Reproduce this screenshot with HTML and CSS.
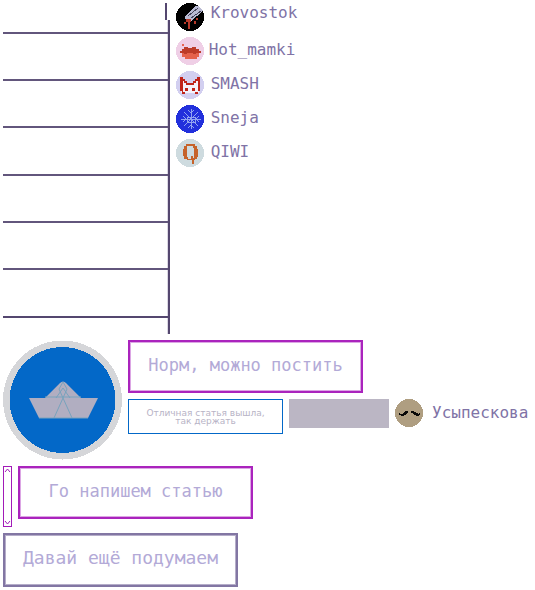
FILE: index.html
```html
<!DOCTYPE html>
<html lang="ru">
<head>
<meta charset="utf-8">
<title>Чаты</title>
<link rel="stylesheet" href="styles.css">
</head>
<body>
<main class="page">
  <section class="top">
    <div class="list">
      <div class="notch"></div>
      <div class="slots">
        <div class="slot slot-first"></div><div class="slot"></div><div class="slot"></div><div class="slot"></div><div class="slot"></div><div class="slot"></div><div class="slot"></div>
      </div>
    </div>
    <ul class="contacts">
      <li class="contact contact-first">
        <svg class="avatar" viewBox="0 0 28 28" shape-rendering="crispEdges"><circle cx="14" cy="14" r="14" fill="#000"/><path d="M9 13L20 3H23L27 8L15 18H12L9 16Z" fill="#b9bad2"/><path d="M12 13L22 5M15 15L25 8" stroke="#45435a" stroke-width="1"/><path d="M10 16h5v3h-1v7h-2v-7h-2v2H8v-2h2zM18 18h2v3h-2zM20 15h2v2h-2z" fill="#b73a2b"/></svg>
        <span class="name">Krovostok</span>
      </li>
      <li class="contact contact-near">
        <svg class="avatar" viewBox="0 0 28 28" shape-rendering="crispEdges"><circle cx="14" cy="14" r="14" fill="#efcfe6"/><path d="M4 14h2v-2h2v-2h4v1h4v-1h4v2h3v2h2v2h-2v4h-2v2H9v-2H6v-4H4z" fill="#e5614c"/><path d="M4 14h2v-2h2v-2h4v1h4v-1h4v2h3v2h2v2h-5v1h-3v-1h-6v1H8v-1H4z" fill="#bd3b29"/><path d="M6 7h2v2H6z" fill="#e86450"/></svg>
        <span class="name">Hot_mamki</span>
      </li>
      <li class="contact">
        <svg class="avatar" viewBox="0 0 28 28" shape-rendering="crispEdges"><circle cx="14" cy="14" r="14" fill="#d2cff0"/><path d="M5 22V8L11 13H17L23 8V22" fill="#f4f1fb"/><path d="M4 6h3v2h2v2h2v2h6v-2h2V8h2V6h3v14h-2v3h-3v-2h3V10h-2v2h-2v2h-8v-2H8v-2H7v11h2v2H6v-3H4z" fill="#c0241a"/><path d="M9 17h3v3H9zM16 17h3v3h-3z" fill="#c0241a"/></svg>
        <span class="name">SMASH</span>
      </li>
      <li class="contact">
        <svg class="avatar" viewBox="0 0 28 28" shape-rendering="crispEdges"><circle cx="14" cy="14" r="14" fill="#2230dc"/><path d="M15 4V24M5 14H25M8 7L22 21M22 7L8 21M12 5L15 8L18 5M12 23L15 20L18 23M7 11L10 14L7 17M23 11L20 14L23 17M11 12h8v5h-8z" fill="none" stroke="#91a4f1"/></svg>
        <span class="name">Sneja</span>
      </li>
      <li class="contact">
        <svg class="avatar" viewBox="0 0 28 28" shape-rendering="crispEdges"><circle cx="14" cy="14" r="14" fill="#cedbdf"/><path fill-rule="evenodd" d="M10 5h9v2h2v3h1v8h-1v2h-2v1h-1v4h-2v-4h-5v-1H8v-3H7v-7h1V7h2zM11 7v2v9h1v2h3v-3h2v2h1v-10h-1V7z" fill="#c6632a"/></svg>
        <span class="name">QIWI</span>
      </li>
    </ul>
  </section>
  <section class="chat">
    <svg class="boat" viewBox="0 0 119 120"><g shape-rendering="crispEdges"><circle cx="59.5" cy="60" r="59.5" fill="#d5d6d9"/><circle cx="59.5" cy="60" r="53" fill="#0368c8"/></g><path d="M26 58H42L57 43Q60 40 63 43L78 58H95L85 78H36Z" fill="#b1aec1"/><path d="M42 57H78M60 58L51 78M60 58L69 78M60 42L56 49L60 58L64 49ZM60 48L53 58M60 48L67 58M36 78H85" fill="none" stroke="#78a3bd"/></svg>
    <div class="replies">
      <button class="choice" type="button">Норм, можно постить</button>
      <div class="row">
        <p class="bubble">Отличная статья вышла, так держать</p>
        <div class="blank"></div>
        <div class="person">
          <svg class="avatar" viewBox="0 0 28 28" shape-rendering="crispEdges"><circle cx="14" cy="14" r="14" fill="#af9e81"/><path d="M4 14h1v1h3v-1h1v-1h1v-1h3v2h-1v1h-1v1H9v1H6v-1H4zM16 12h3v1h2v1h2v1h1v-1h1v2h-1v1h-3v-1h-2v-1h-1v-1h-2z" fill="#080808"/></svg>
          <span class="name">Усыпескова</span>
        </div>
      </div>
    </div>
  </section>
  <section class="bottom">
    <div class="scroll">
      <svg class="arrow" viewBox="0 0 7 5"><path d="M1 4L3.5 1L6 4" fill="none" stroke="#a21ab8"/></svg>
      <svg class="arrow" viewBox="0 0 7 5"><path d="M1 1L3.5 4L6 1" fill="none" stroke="#a21ab8"/></svg>
    </div>
    <button class="choice" type="button">Го напишем статью</button>
  </section>
  <button class="choice choice-muted" type="button">Давай ещё подумаем</button>
</main>
</body>
</html>
```
FILE: styles.css
```css
* { box-sizing: border-box; }
body { margin: 0; background: #fff; }
.page { padding: 3px; }
.top { display: flex; gap: 6px; }
.list { flex: 0 0 31.5%; }
.notch { height: 17px; margin-right: 3px; border-right: 2px solid #54476f; }
.slots { border-right: 2px solid #54476f; box-shadow: inset -1px 0 #dcd8e4; padding-bottom: 16px; }
.slot { height: 47px; border-bottom: 2px solid #62567c; }
.slot-first { height: 14px; }
.slot:nth-child(4), .slot:last-child { height: 48px; }
.slot:last-child { border-color: #54476f; }
.contacts { list-style: none; margin: 0; padding: 0; display: flex; flex-direction: column; gap: 6px; }
.contact, .person { display: flex; align-items: center; gap: 7px; }
.contact-near { gap: 5px; }
.avatar { width: 28px; height: 28px; flex: none; }
.name { font: 16px/20px "DejaVu Sans Mono", monospace; color: #8073a6; }
.contact .name { padding-bottom: 2px; }
.contact-first .name { padding-bottom: 8px; }
.chat { display: flex; gap: 6px; margin-top: 6px; }
.boat { width: 119px; height: 120px; flex: none; }
.replies { flex: 1; min-width: 0; }
.choice { display: block; width: 235px; height: 53px; margin: 0; padding: 0 0 4px; border: 2px solid #aa24bd; border-radius: 0; box-shadow: inset 0 0 0 1px #dca6e4; background: #fff; color: #b3aad7; font: 17px/24px "DejaVu Sans Mono", monospace; }
.row { display: flex; gap: 6px; margin-top: 6px; }
.bubble { width: 155px; height: 35px; margin: 0; padding: 9px 12px; border: 1px solid #0368c8; color: #b7b3c6; text-align: center; font: 9px/8px "DejaVu Sans", sans-serif; }
.blank { width: 100px; height: 29px; background: #bbb6c4; }
.person { height: 28px; gap: 9px; }
.bottom { display: flex; gap: 6px; margin: 6px 0; }
.scroll { width: 9px; height: 61px; border: 1px solid #a21ab8; padding: 1px 0; display: flex; flex-direction: column; justify-content: space-between; }
.arrow { width: 7px; height: 5px; }
.choice-muted { height: 54px; border-color: #8276a3; box-shadow: inset 0 0 0 1px #b5adc9; font-size: 18px; }
```
